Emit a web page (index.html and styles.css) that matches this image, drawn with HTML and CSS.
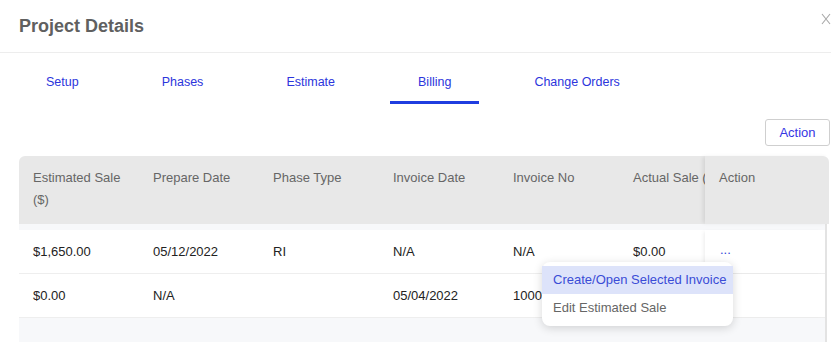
FILE: index.html
```html
<!DOCTYPE html>
<html lang="en">
<head>
    <meta charset="UTF-8">
    <meta name="viewport" content="width=device-width, initial-scale=1.0">
    <title>Project Details</title>
    <link rel="stylesheet" href="styles.css">
</head>
<body>
    <div class="modal">
        <div class="modal-header">
            <h1>Project Details</h1>
            <button class="close-btn" aria-label="Close">
                <svg width="10" height="12" viewBox="0 0 10 12"><path d="M1 1 L9 11 M9 1 L1 11" stroke="#a8a8a8" stroke-width="1.1" fill="none"/></svg>
            </button>
        </div>

        <div class="tabs">
            <a class="tab">Setup</a>
            <a class="tab">Phases</a>
            <a class="tab">Estimate</a>
            <a class="tab active">Billing</a>
            <a class="tab">Change Orders</a>
        </div>

        <div class="toolbar">
            <button class="btn-outline">Action</button>
        </div>

        <div class="table">
            <div class="thead">
                <div class="th">Estimated Sale ($)</div>
                <div class="th">Prepare Date</div>
                <div class="th">Phase Type</div>
                <div class="th">Invoice Date</div>
                <div class="th">Invoice No</div>
                <div class="th th-clip">Actual Sale ($)</div>
                <div class="th th-action">Action</div>
            </div>
            <div class="tbody">
                <div class="row">
                    <div class="td">$1,650.00</div>
                    <div class="td">05/12/2022</div>
                    <div class="td">RI</div>
                    <div class="td">N/A</div>
                    <div class="td">N/A</div>
                    <div class="td td-clip">$0.00</div>
                    <div class="td td-action">
                        <span class="dots">...</span>
                        <div class="menu">
                            <div class="menu-item selected">Create/Open Selected Invoice</div>
                            <div class="menu-item">Edit Estimated Sale</div>
                        </div>
                    </div>
                </div>
                <div class="row">
                    <div class="td">$0.00</div>
                    <div class="td">N/A</div>
                    <div class="td"></div>
                    <div class="td">05/04/2022</div>
                    <div class="td">1000012</div>
                    <div class="td td-clip"></div>
                    <div class="td td-action"></div>
                </div>
            </div>
        </div>
    </div>
</body>
</html>
```

FILE: styles.css
```css
* {
    margin: 0;
    padding: 0;
    box-sizing: border-box;
}

body {
    font-family: 'Liberation Sans', Arial, sans-serif;
    font-size: 13px;
    background: white;
    overflow: hidden;
}

.modal {
    position: relative;
    background: white;
    min-height: 342px;
}

.modal-header {
    height: 53px;
    padding: 1px 19px 0;
    display: flex;
    align-items: center;
    border-bottom: 1px solid #ededed;
}

.modal-header h1 {
    font-size: 18px;
    font-weight: bold;
    color: #606060;
}

.close-btn {
    position: absolute;
    top: 13px;
    right: 0;
    border: none;
    background: none;
    line-height: 0;
}

.tabs {
    display: flex;
    gap: 27px;
    padding-left: 18px;
}

.tab {
    padding: 20px 28px 10px;
    font-size: 12.5px;
    line-height: 18px;
    color: #2c35dc;
    border-bottom: 3px solid transparent;
    cursor: pointer;
}

.tab.active {
    border-bottom-color: #1f3de0;
}

.toolbar {
    display: flex;
    justify-content: flex-end;
    padding: 15px 1px 0 0;
}

.btn-outline {
    font-family: inherit;
    font-size: 13px;
    width: 65px;
    height: 27px;
    background: white;
    color: #3636e4;
    border: 1px solid #cfcfcf;
    border-radius: 3px;
}

.table {
    margin: 10px 2px 0 19px;
}

.thead {
    display: flex;
    height: 68px;
    background: #e8e8e8;
    border-radius: 6px 6px 0 0;
    color: #666;
}

.th {
    width: 120px;
    padding: 11px 14px;
    line-height: 22px;
}

.tbody {
    background: #f7f8fa;
    padding-top: 6px;
    margin-right: 2px;
    border-right: 2px solid #e3e3e3;
    height: 120px;
}

.row {
    display: flex;
    height: 44px;
    background: white;
    border-bottom: 1px solid #eeeeee;
    color: #222;
}

.td {
    width: 120px;
    padding: 0 14px;
    display: flex;
    align-items: center;
}

.th.th-clip,
.td.td-clip {
    width: 86px;
    padding-right: 0;
    white-space: nowrap;
    overflow: hidden;
}

.th.th-action {
    flex: 1;
    box-shadow: -3px 0 4px -1px rgba(0,0,0,0.09);
}

.td.td-action {
    flex: 1;
    position: relative;
    box-shadow: -3px 0 4px -2px rgba(0,0,0,0.08);
}

.dots {
    color: #3346d8;
    font-size: 13px;
    margin: -4px 0 0 1px;
}

.menu {
    position: absolute;
    left: -163px;
    top: 32px;
    width: 191px;
    padding: 4px 0;
    background: white;
    border-radius: 8px;
    box-shadow: 0 2px 10px rgba(0,0,0,0.16);
    z-index: 10;
}

.menu-item {
    height: 28px;
    line-height: 28px;
    padding-left: 11px;
    color: #666;
    white-space: nowrap;
}

.menu-item.selected {
    background: #dde3fa;
    color: #3a4cd6;
}
```
